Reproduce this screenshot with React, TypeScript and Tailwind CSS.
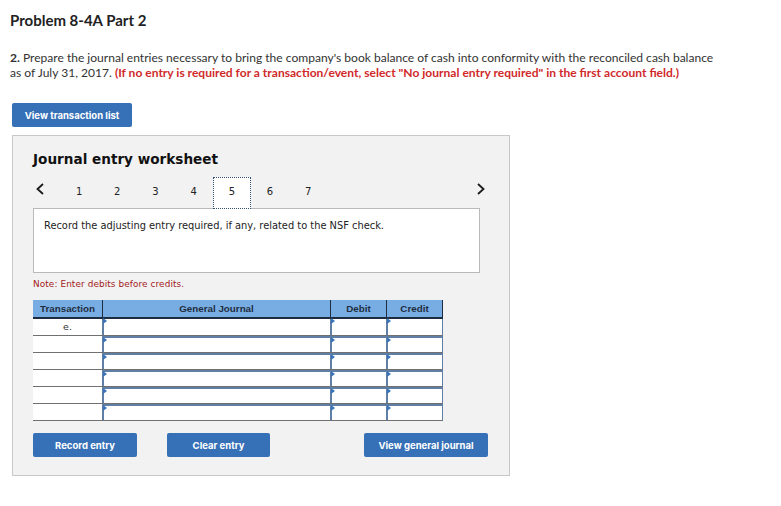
const ROWS = ['e.', '', '', '', '', ''];
const TABS = [1, 2, 3, 4, 5, 6, 7];

const Chevron = ({ dir }: { dir: 'left' | 'right' }) => (
  <svg width="10" height="14" viewBox="0 0 10 14" fill="none" stroke="#1a1a1a" strokeWidth="1.8">
    <path d={dir === 'left' ? 'M8 2 L2.5 7 L8 12' : 'M2 2 L7.5 7 L2 12'} />
  </svg>
);

function InputCell({ className }: { className: string }) {
  return (
    <div className={`relative bg-white border-l-2 border-[#5f7fa6] ${className}`}>
      <span className="absolute left-[-1px] top-[-1px] w-0 h-0 border-y-[3px] border-y-transparent border-l-[4px] border-l-[#3b73b9]" />
    </div>
  );
}

function Btn({ label, className }: { label: string; className: string }) {
  return (
    <button className={`block h-6 pt-[2px] bg-[#3670b7] rounded-[2px] text-white text-[9.5px] font-bold font-['Inter',sans-serif] ${className}`}>
      {label}
    </button>
  );
}

export default function App() {
  return (
    <div className="w-[781px] h-[506px] bg-white font-['Lato',sans-serif] text-[#2a2a2a] overflow-hidden">
      <div className="pl-[10px] pt-[11px]">
        <h1 className="text-[15px] font-bold leading-[18px] text-[#222]">Problem 8-4A Part 2</h1>
        <p className="mt-[22px] w-[712px] text-[12.05px] leading-[14.5px] text-[#333]">
          <b>2.</b> Prepare the journal entries necessary to bring the company's book balance of cash into conformity with the reconciled cash balance as of July 31, 2017.{' '}
          <b className="text-[#d12a2a]">(If no entry is required for a transaction/event, select "No journal entry required" in the first account field.)</b>
        </p>
      </div>

      <div className="pl-3 pt-[23px]">
        <Btn label="View transaction list" className="w-[120px]" />

        <div className="mt-[8px] w-[498px] h-[341px] bg-[#f2f2f2] border border-[#c8c8c8] pl-5 pt-[14px] font-['DejaVu_Sans',sans-serif]">
          <h2 className="text-[13.6px] font-bold leading-[18px] text-[#111]">Journal entry worksheet</h2>

          <div className="mt-[9px] w-[447px] h-[32px] flex items-center relative z-10">
            <span className="w-[27px] pl-[2px] flex -translate-y-[4px]"><Chevron dir="left" /></span>
            {TABS.map(t => (
              <span
                key={t}
                className={`w-[38.2px] h-[32px] pb-[3px] flex items-center justify-center text-[10px] text-[#222] ${t === 5 ? 'bg-white border border-dotted border-[#34507a]' : ''}`}
              >
                {t}
              </span>
            ))}
            <span className="ml-auto flex translate-x-[6px] -translate-y-[4px]"><Chevron dir="right" /></span>
          </div>

          <div className="-mt-px w-[447px] h-[65px] bg-white border border-[#b9b9b9] pl-[10px] pt-[10px] text-[9.85px] leading-[14px] text-[#222]">
            Record the adjusting entry required, if any, related to the NSF check.
          </div>

          <p className="mt-[5px] text-[8.9px] leading-[12px] text-[#a32020] tracking-[0.1px]">Note: Enter debits before credits.</p>

          <div className="mt-[10px] w-[410px]">
            <div className="grid grid-cols-[70px_228px_56px_56px] h-[19px] bg-[#78ade4] border-b-2 border-[#1d2c40] font-['Liberation_Sans',sans-serif] text-[9.8px] font-bold text-[#1f2d40] leading-[17px] text-center">
              <div className="border-r border-[#1d2c40]">Transaction</div>
              <div className="border-r border-[#1d2c40]">General Journal</div>
              <div className="border-r border-[#1d2c40]">Debit</div>
              <div className="border-r border-[#1d2c40]">Credit</div>
            </div>
            {ROWS.map((r, i) => {
              const top = i === 0 ? '' : 'border-t-2';
              return (
                <div key={i} className="grid grid-cols-[69px_228px_56px_57px] h-[17px] border-b border-[#707070]">
                  <div className="bg-white text-center text-[9.5px] leading-[15px] text-[#333]">{r}</div>
                  <InputCell className={top} />
                  <InputCell className={top} />
                  <InputCell className={`${top} border-r`} />
                </div>
              );
            })}
          </div>

          <div className="mt-[12px] w-[455px] flex">
            <Btn label="Record entry" className="w-[104px]" />
            <Btn label="Clear entry" className="w-[103px] ml-[30px]" />
            <Btn label="View general journal" className="w-[124px] ml-auto" />
          </div>
        </div>
      </div>
    </div>
  );
}
